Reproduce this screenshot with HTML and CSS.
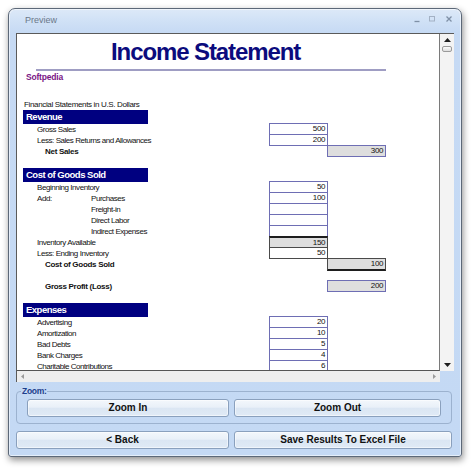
FILE: index.html
```html
<!DOCTYPE html>
<html>
<head>
<meta charset="utf-8">
<title>Preview</title>
<link rel="stylesheet" href="styles.css">
</head>
<body>
<div class="window">
  <div class="titlebar">
    <span class="title">Preview</span>
    <div class="controls">
      <svg class="ctl ctl-min" width="10" height="10" viewBox="0 0 10 10"><path d="M2.5 7.5h5" stroke="#7f90a6" stroke-width="1.3"/></svg>
      <svg class="ctl ctl-max" width="10" height="10" viewBox="0 0 10 10"><rect x="2.5" y="2.5" width="5" height="4.5" fill="none" stroke="#a3b1c4" stroke-width="1"/></svg>
      <svg class="ctl ctl-close" width="10" height="10" viewBox="0 0 10 10"><path d="M2.5 2.5l5 5M7.5 2.5l-5 5" stroke="#7f90a6" stroke-width="1.3"/></svg>
    </div>
  </div>

  <div class="viewer">
    <div class="doc">
      <div class="doc-title">Income Statement</div>
      <div class="rule"></div>
      <div class="company">Softpedia</div>
      <div class="note">Financial Statements in U.S. Dollars</div>

      <div class="hdr">Revenue</div>
      <div class="row"><span class="lbl l1">Gross Sales</span><span class="cell">500</span></div>
      <div class="row"><span class="lbl l1">Less: Sales Returns and Allowances</span><span class="cell">200</span></div>
      <div class="row"><span class="lbl l2">Net Sales</span><span class="gap"></span><span class="cell gray">300</span></div>
      <div class="blank"></div>

      <div class="hdr">Cost of Goods Sold</div>
      <div class="row"><span class="lbl l1">Beginning Inventory</span><span class="cell">50</span></div>
      <div class="row"><span class="lbl l1"><span class="add">Add:</span>Purchases</span><span class="cell">100</span></div>
      <div class="row"><span class="lbl l3">Freight-in</span><span class="cell"></span></div>
      <div class="row"><span class="lbl l3">Direct Labor</span><span class="cell"></span></div>
      <div class="row"><span class="lbl l3">Indirect Expenses</span><span class="cell"></span></div>
      <div class="row"><span class="lbl l1">Inventory Available</span><span class="cell gray dk tt">150</span></div>
      <div class="row"><span class="lbl l1">Less: Ending Inventory</span><span class="cell dk">50</span></div>
      <div class="row"><span class="lbl l2">Cost of Goods Sold</span><span class="gap"></span><span class="cell gray dk tb">100</span></div>
      <div class="blank"></div>
      <div class="row"><span class="lbl l2">Gross Profit (Loss)</span><span class="gap"></span><span class="cell gray">200</span></div>
      <div class="blank"></div>

      <div class="hdr">Expenses</div>
      <div class="row"><span class="lbl l1">Advertising</span><span class="cell">20</span></div>
      <div class="row"><span class="lbl l1">Amortization</span><span class="cell">10</span></div>
      <div class="row"><span class="lbl l1">Bad Debts</span><span class="cell">5</span></div>
      <div class="row"><span class="lbl l1">Bank Charges</span><span class="cell">4</span></div>
      <div class="row"><span class="lbl l1">Charitable Contributions</span><span class="cell">6</span></div>
    </div>
    <div class="vscroll">
      <svg class="arrow-up" width="7" height="4" viewBox="0 0 7 4"><path d="M0 4L3.5 0L7 4Z" fill="#1e1e1e"/></svg>
      <div class="thumb"></div>
      <svg class="arrow-down" width="7" height="4" viewBox="0 0 7 4"><path d="M0 0L3.5 4L7 0Z" fill="#1e1e1e"/></svg>
    </div>
    <div class="hscroll">
      <svg width="3" height="5" viewBox="0 0 3 5"><path d="M3 0L0 2.5L3 5Z" fill="#9a9a9a"/></svg>
      <svg width="3" height="5" viewBox="0 0 3 5"><path d="M0 0L3 2.5L0 5Z" fill="#9a9a9a"/></svg>
    </div>
    <div class="corner"></div>
  </div>

  <fieldset class="zoom-group">
    <legend>Zoom:</legend>
    <div class="btn-row">
      <button class="btn zin">Zoom In</button>
      <button class="btn zout">Zoom Out</button>
    </div>
  </fieldset>

  <div class="bottom-row">
    <button class="btn back">&lt; Back</button>
    <button class="btn save">Save Results To Excel File</button>
  </div>
</div>
</body>
</html>
```

FILE: styles.css
```css
* { box-sizing: border-box; }
html, body { margin: 0; padding: 0; }
body {
  width: 474px;
  height: 471px;
  background: #ffffff;
  font-family: "Liberation Sans", Arial, sans-serif;
  overflow: hidden;
}

.window {
  margin: 8px 0 0 8px;
  width: 454px;
  height: 449px;
  border: 1px solid #5c6878;
  border-radius: 7px 7px 3px 3px;
  background: linear-gradient(to bottom, #dde9f8 0, #d0e1f6 12px, #c6daf4 24px, #c4d9f4 100%);
  box-shadow: 1px 3px 7px rgba(0, 0, 0, 0.45), inset 0 0 0 1px rgba(255, 255, 255, 0.55);
  display: flex;
  flex-direction: column;
}

/* title bar */
.titlebar {
  flex: none;
  height: 24px;
  display: flex;
  align-items: flex-start;
  padding-left: 16px;
}
.title {
  margin-top: 5px;
  font-size: 9px;
  line-height: 12px;
  color: #6b7889;
}
.controls {
  margin-left: auto;
  display: flex;
  padding: 5px 7px 0 0;
}
.ctl { display: block; }
.ctl-min { margin-right: 5px; }
.ctl-max { margin-right: 7px; }

/* viewer */
.viewer {
  flex: none;
  margin: 0 7px;
  width: 438px;
  height: 349px;
  border-top: 1px solid #5a5a5a;
  border-left: 1px solid #5a5a5a;
  display: grid;
  grid-template-columns: 423px 14px;
  grid-template-rows: 337px 11px;
}
.doc {
  background: #ffffff;
  border-right: 1px solid #7a7a7a;
  border-bottom: 1px solid #555555;
  overflow: hidden;
  color: #111111;
}
.vscroll {
  background: #f3f3f3;
  display: flex;
  flex-direction: column;
  align-items: center;
}
.arrow-up { display: block; margin-top: 4px; }
.thumb {
  margin-top: 4px;
  width: 10px;
  height: 6px;
  border: 1px solid #9a9a9a;
  border-radius: 2px;
  background: linear-gradient(to bottom, #fcfcfc, #dedede);
}
.arrow-down { display: block; margin-top: auto; margin-bottom: 4px; }
.hscroll {
  background: #eeeeee;
  display: flex;
  align-items: center;
  justify-content: space-between;
  padding: 0 4px;
}
.hscroll svg { display: block; }

/* document */
.doc-title {
  margin: 6px 0 0 94px;
  font-size: 24px;
  line-height: 24px;
  font-weight: bold;
  color: #0b0b7d;
  letter-spacing: -1.1px;
  white-space: nowrap;
}
.rule {
  margin: 5px 0 0 19px;
  width: 350px;
  height: 2px;
  background: #9f9dc3;
}
.company {
  margin: 1px 0 0 9px;
  font-size: 8.5px;
  line-height: 10px;
  font-weight: bold;
  color: #7a1585;
  letter-spacing: -0.2px;
}
.note {
  margin: 17px 0 0 7px;
  font-size: 8px;
  line-height: 11px;
  letter-spacing: -0.35px;
  white-space: nowrap;
}
.hdr {
  margin-left: 6px;
  width: 125px;
  height: 14px;
  background: #000080;
  color: #ffffff;
  font-size: 9.5px;
  font-weight: bold;
  line-height: 14px;
  padding-left: 3px;
  letter-spacing: -0.5px;
  white-space: nowrap;
}
.row {
  display: flex;
  align-items: flex-start;
  height: 11px;
}
.blank { height: 11px; }
.lbl {
  flex: none;
  width: 252px;
  font-size: 8px;
  line-height: 11px;
  letter-spacing: -0.45px;
  white-space: nowrap;
}
.l1 { padding-left: 20px; }
.l2 { padding-left: 28px; font-weight: bold; letter-spacing: -0.3px; }
.l3 { padding-left: 74px; }
.add { display: inline-block; width: 54px; }
.gap { flex: none; width: 58px; }
.cell {
  flex: none;
  width: 59px;
  height: 12px;
  margin: -1px -1px 0 0;
  border: 1px solid #6e6eb4;
  background: #ffffff;
  font-size: 8px;
  line-height: 10px;
  text-align: right;
  padding-right: 2px;
  letter-spacing: -0.4px;
}
.gray { background: #dedede; }
.dk { border-color: #4a4a4a; }
.tt { border-top: 2px solid #1e1e1e; line-height: 9px; }
.tb { height: 13px; border-bottom: 2px solid #1e1e1e; }

/* zoom group */
.zoom-group {
  flex: none;
  margin: 4px 9px 0 7px;
  padding: 0;
  min-width: 0;
  border: 1px solid #9cb2cf;
  border-radius: 4px;
}
.zoom-group legend {
  margin-left: 4px;
  padding: 0 1px;
  font-size: 8.5px;
  line-height: 10px;
  font-weight: bold;
  color: #1d3e8c;
  letter-spacing: -0.3px;
}
.btn-row {
  display: flex;
  gap: 5px;
  padding: 3px 10px 6px;
}
.btn {
  flex: none;
  height: 18px;
  margin: 0;
  padding: 0;
  border: 1px solid #8aa0bd;
  border-radius: 3px;
  background: linear-gradient(to bottom, #f3f7fc 0%, #e9f0f8 45%, #dbe6f3 52%, #e0eaf6 100%);
  box-shadow: inset 0 0 0 1px rgba(255, 255, 255, 0.5);
  font-family: inherit;
  font-size: 10px;
  font-weight: bold;
  line-height: 16px;
  color: #111111;
  text-align: center;
}
.zin { width: 202px; }
.zout { width: 207px; }
.bottom-row {
  flex: none;
  display: flex;
  gap: 5px;
  margin: 7px 0 0 7px;
}
.back { width: 213px; }
.save { width: 218px; }
```
